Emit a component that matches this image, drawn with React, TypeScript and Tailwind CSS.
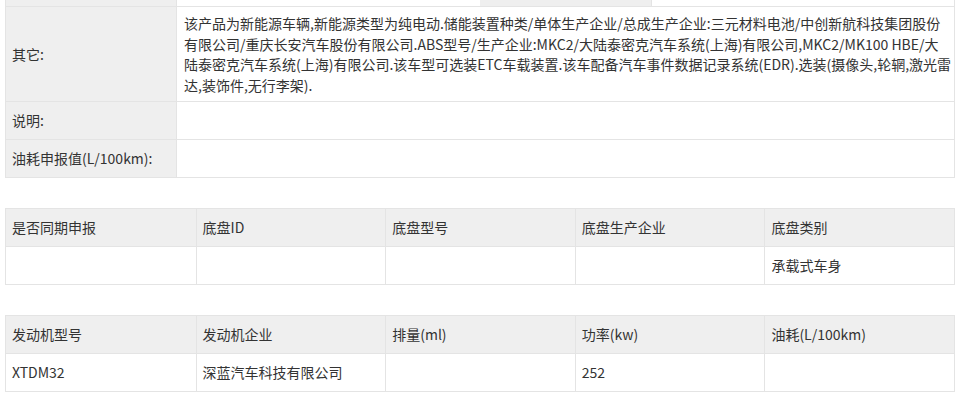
const FONT = "font-['Noto_Sans_CJK_SC','Noto_Sans',sans-serif]";

const OTHER_LINES = [
  "该产品为新能源车辆,新能源类型为纯电动.储能装置种类/单体生产企业/总成生产企业:三元材料电池/中创新航科技集团股份",
  "有限公司/重庆长安汽车股份有限公司.ABS型号/生产企业:MKC2/大陆泰密克汽车系统(上海)有限公司,MKC2/MK100 HBE/大",
  "陆泰密克汽车系统(上海)有限公司.该车型可选装ETC车载装置.该车配备汽车事件数据记录系统(EDR).选装(摄像头,轮辋,激光雷",
  "达,装饰件,无行李架).",
];

const CHASSIS = {
  head: ["是否同期申报", "底盘ID", "底盘型号", "底盘生产企业", "底盘类别"],
  row: ["", "", "", "", "承载式车身"],
};

const ENGINE = {
  head: ["发动机型号", "发动机企业", "排量(ml)", "功率(kw)", "油耗(L/100km)"],
  row: ["XTDM32", "深蓝汽车科技有限公司", "", "252", ""],
};

function InfoRow({ label, children, tall }: { label: string; children?: React.ReactNode; tall?: boolean }) {
  return (
    <div className={`flex border-b border-[#e4e4e4] ${tall ? "h-[95px]" : "h-[38px]"}`}>
      <div className="w-[170px] shrink-0 bg-[#efefef] flex items-center pl-[6px]">{label}</div>
      <div className="flex-1 border-l border-[#e4e4e4] flex flex-col justify-center pl-[7px]">{children}</div>
    </div>
  );
}

function GridTable({ head, row }: { head: string[]; row: string[] }) {
  return (
    <div className="border border-[#e4e4e4]">
      <div className="grid grid-cols-5 h-[38px] bg-[#efefef] border-b border-[#e4e4e4]">
        {head.map((h, i) => (
          <div key={i} className={`flex items-center pl-[6px] ${i > 0 ? "border-l border-[#e4e4e4]" : ""}`}>
            {h}
          </div>
        ))}
      </div>
      <div className="grid grid-cols-5 h-[37px]">
        {row.map((c, i) => (
          <div key={i} className={`flex items-center pl-[6px] ${i > 0 ? "border-l border-[#e4e4e4]" : ""}`}>
            {c}
          </div>
        ))}
      </div>
    </div>
  );
}

export default function App() {
  return (
    <div className={`${FONT} text-[14px] text-[#333] bg-white w-[962px] h-[401px] overflow-hidden`}>
      <div className="pl-[5px] w-[955px]">
        {/* spec table (cut off at top) */}
        <div className="border-x border-[#e4e4e4]">
          <div className="flex h-[7px] border-b border-[#e4e4e4]">
            <div className="w-[170px] bg-[#efefef]" />
            <div className="w-[304px] border-l border-[#e4e4e4]" />
            <div className="w-[171px] bg-[#efefef]" />
            <div className="flex-1 border-l border-[#e4e4e4]" />
          </div>
          <InfoRow label="其它:" tall>
            {OTHER_LINES.map((l, i) => (
              <div key={i} className="whitespace-nowrap leading-[20.5px]">
                {l}
              </div>
            ))}
          </InfoRow>
          <InfoRow label="说明:" />
          <InfoRow label="油耗申报值(L/100km):" />
        </div>

        <div className="mt-[30px]">
          <GridTable head={CHASSIS.head} row={CHASSIS.row} />
        </div>

        <div className="mt-[30px]">
          <GridTable head={ENGINE.head} row={ENGINE.row} />
        </div>
      </div>
    </div>
  );
}
